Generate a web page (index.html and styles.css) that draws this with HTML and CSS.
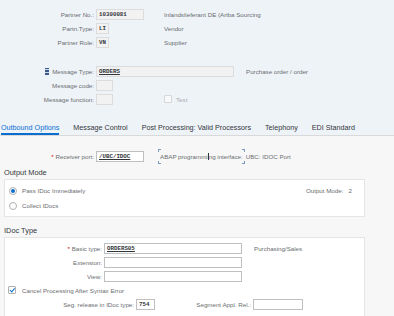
FILE: index.html
```html
<!DOCTYPE html>
<html lang="en">

<head>
    <meta charset="UTF-8">
    <title>Partner Profile - Outbound Parameters</title>
    <link rel="stylesheet" href="styles.css">
</head>

<body>
    <div class="header">
        <div class="row">
            <span class="lbl">Partner No.:</span>
            <span class="field ro w48">10300081</span>
            <span class="desc gap20">Inlandslieferant DE (Ariba Sourcing</span>
        </div>
        <div class="row">
            <span class="lbl">Partn.Type:</span>
            <span class="field ro w13">LI</span>
            <span class="desc gap55">Vendor</span>
        </div>
        <div class="row">
            <span class="lbl">Partner Role:</span>
            <span class="field ro w13">VN</span>
            <span class="desc gap55">Supplier</span>
        </div>

        <div class="row first-msg">
            <span class="lbl"><span class="msg-icon"></span>Message Type:</span>
            <span class="field ro w138 link">ORDERS</span>
            <span class="desc gap12">Purchase order / order</span>
        </div>
        <div class="row">
            <span class="lbl">Message code:</span>
            <span class="field ro w17"></span>
        </div>
        <div class="row">
            <span class="lbl">Message function:</span>
            <span class="field ro w17"></span>
            <span class="check disabled gap51"></span>
            <span class="check-text disabled">Test</span>
        </div>

        <div class="tabs">
            <span class="tab active">Outbound Options</span>
            <span class="tab">Message Control</span>
            <span class="tab">Post Processing: Valid Processors</span>
            <span class="tab">Telephony</span>
            <span class="tab">EDI Standard</span>
        </div>
    </div>

    <div class="content">
        <div class="row port-row">
            <span class="lbl"><span class="req">*</span> Receiver port:</span>
            <span class="field w48 link">/UBC/IDOC</span>
            <span class="abap">
                <span class="corner tl"></span>
                <span class="corner bl"></span>
                ABAP programmi<span class="caret"></span>ng interface:
                <span class="corner tr"></span>
                <span class="corner br"></span>
            </span>
            <span class="port-desc">UBC: IDOC Port</span>
        </div>

        <div class="group-title">Output Mode</div>
        <div class="box output-box">
            <div class="radio-row">
                <span class="radio on"></span>
                <span class="opt">Pass IDoc Immediately</span>
                <span class="out-mode">Output Mode:&nbsp;&nbsp;&nbsp;2</span>
            </div>
            <div class="radio-row">
                <span class="radio"></span>
                <span class="opt">Collect IDocs</span>
            </div>
        </div>

        <div class="group-title idoc-title">IDoc Type</div>
        <div class="box idoc-box">
            <div class="row">
                <span class="lbl wide"><span class="req">*</span> Basic type:</span>
                <span class="field w138 link">ORDERS05</span>
                <span class="desc gap12">Purchasing/Sales</span>
            </div>
            <div class="row">
                <span class="lbl wide">Extension:</span>
                <span class="field w138"></span>
            </div>
            <div class="row">
                <span class="lbl wide">View:</span>
                <span class="field w138"></span>
            </div>
            <div class="row">
                <span class="check on"></span>
                <span class="check-text">Cancel Processing After Syntax Error</span>
            </div>
            <div class="row">
                <span class="lbl seg">Seg. release in IDoc type:</span>
                <span class="field w19">754</span>
                <span class="lbl appl">Segment Appl. Rel.:</span>
                <span class="field w50"></span>
            </div>
        </div>
    </div>
</body>

</html>
```

FILE: styles.css
```css
body {
    margin: 0;
    font-family: 'Liberation Sans', Arial, sans-serif;
    font-size: 6.2px;
    color: #6a6d70;
    background: #f7f7f7;
    width: 394px;
    height: 316px;
    overflow: hidden;
}

.header {
    background: #eef3f8;
    padding-top: 7px;
}

.row {
    display: flex;
    align-items: center;
    height: 14px;
}

.first-msg {
    margin-top: 15px;
}

.lbl {
    width: 96px;
    text-align: right;
    padding-right: 2px;
    box-sizing: border-box;
    white-space: nowrap;
    flex: none;
}

.lbl.wide {
    width: 97px;
    padding-right: 0;
    margin-right: 2px;
}

.field {
    height: 11px;
    box-sizing: border-box;
    border: 1px solid #bfbfbf;
    background: #fff;
    font-family: 'Liberation Mono', 'Courier New', monospace;
    font-weight: bold;
    font-size: 5.8px;
    color: #32363a;
    line-height: 9px;
    padding: 0 2px;
    flex: none;
    white-space: nowrap;
}

.field.ro {
    background: #f2f2f2;
    border-color: #dcdcdc;
}

.field.link {
    text-decoration: underline;
}

.w13 { width: 13px; }
.w17 { width: 17px; }
.w19 { width: 19px; }
.w48 { width: 48px; }
.w50 { width: 50px; }
.w138 { width: 138px; }

.gap12 { margin-left: 12px; }
.gap20 { margin-left: 20px; }
.gap51 { margin-left: 51px; }
.gap55 { margin-left: 55px; }

.desc {
    white-space: nowrap;
}

.msg-icon {
    display: inline-block;
    width: 4px;
    height: 7px;
    margin-right: 3px;
    vertical-align: -1px;
    background: linear-gradient(#3b5b8a 0 1px, #c9d6e6 1px 2px, #3b5b8a 2px 4px, #c9d6e6 4px 5px, #3b5b8a 5px 7px);
}

.check {
    width: 6px;
    height: 6px;
    border: 1px solid #b0b0b0;
    background: #fff;
    border-radius: 1px;
    flex: none;
    position: relative;
}

.check.disabled {
    border-color: #d6d6d6;
    background: #f7f9fb;
}

.check.on::after {
    content: "";
    position: absolute;
    left: 2px;
    top: 0;
    width: 1.5px;
    height: 3.5px;
    border: solid #0a6ed1;
    border-width: 0 1px 1px 0;
    transform: rotate(40deg);
}

.check-text {
    margin-left: 4px;
    white-space: nowrap;
}

.check-text.disabled {
    color: #a9abad;
}

.tabs {
    display: flex;
    gap: 14px;
    margin-top: 16px;
    padding-left: 1px;
    border-bottom: 1px solid #d9d9d9;
    font-size: 7.2px;
    color: #32363a;
}

.tab {
    height: 13px;
    line-height: 12px;
    box-sizing: border-box;
    white-space: nowrap;
}

.tab.active {
    color: #0a6ed1;
    border-bottom: 2px solid #0a6ed1;
}

.content {
    padding: 0 29px 0 4px;
}

.port-row {
    margin-top: 13px;
    margin-left: -4px;
}

.req {
    color: #bb0000;
}

.abap {
    position: relative;
    margin-left: 14px;
    padding: 0 2px;
    white-space: nowrap;
}

.corner {
    position: absolute;
    width: 2px;
    height: 2px;
    border: 0 solid #7a9cc2;
}

.corner.tl { left: 0; top: -4px; border-width: 1px 0 0 1px; }
.corner.bl { left: 0; bottom: -4px; border-width: 0 0 1px 1px; }
.corner.tr { right: 0; top: -4px; border-width: 1px 1px 0 0; }
.corner.br { right: 0; bottom: -4px; border-width: 0 1px 1px 0; }

.caret {
    display: inline-block;
    width: 1px;
    height: 7px;
    background: #32363a;
    vertical-align: -1px;
}

.port-desc {
    margin-left: 1px;
    white-space: nowrap;
}

.group-title {
    font-size: 7.4px;
    color: #32363a;
    margin-top: 5px;
    height: 9px;
    line-height: 9px;
}

.idoc-title {
    margin-top: 9px;
}

.box {
    background: #fff;
    border: 1px solid #e5e5e5;
    margin-top: 2px;
}

.output-box {
    height: 38px;
    box-sizing: border-box;
    padding: 3px 12px 0 4px;
}

.radio-row {
    display: flex;
    align-items: center;
    height: 15px;
}

.radio {
    width: 6px;
    height: 6px;
    border: 1px solid #b0b0b0;
    border-radius: 50%;
    background: #fff;
    flex: none;
    position: relative;
}

.radio.on::after {
    content: "";
    position: absolute;
    left: 1px;
    top: 1px;
    width: 4px;
    height: 4px;
    border-radius: 50%;
    background: #0a6ed1;
}

.opt {
    margin-left: 5px;
}

.out-mode {
    margin-left: auto;
}

.idoc-box {
    height: 82px;
    box-sizing: border-box;
    padding: 3px 0 0 0;
}

.idoc-box .check {
    margin-left: 3px;
}

.idoc-box .check-text {
    margin-left: 6px;
}

.lbl.seg {
    width: 131px;
}

.lbl.appl {
    width: 98px;
}
```
